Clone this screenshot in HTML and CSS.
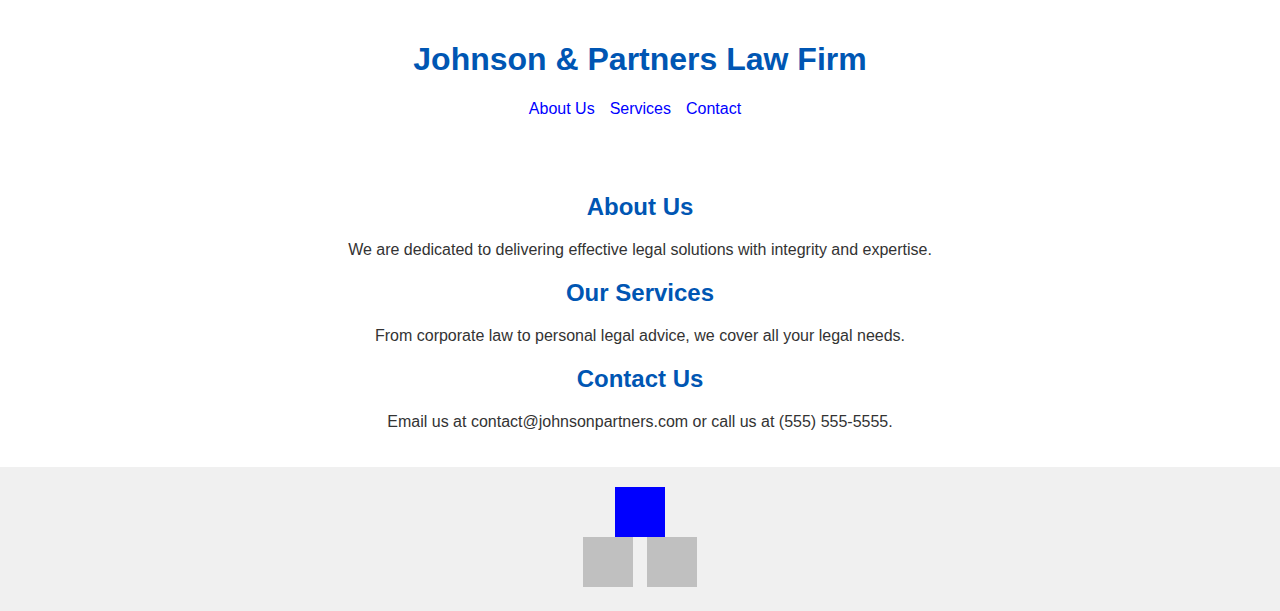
FILE: index.html
```html
<!DOCTYPE html>
<html lang="en">
<head>
<meta charset="utf-8">
<title>Johnson &amp; Partners Law Firm</title>
<link rel="stylesheet" href="styles.css">
</head>
<body>
<header class="site-header">
  <h1 class="title">Johnson &amp; Partners Law Firm</h1>
  <nav class="nav">
    <a href="#about">About Us</a>
    <a href="#services">Services</a>
    <a href="#contact">Contact</a>
  </nav>
</header>
<main class="content">
  <section id="about" class="section">
    <h2 class="section-title">About Us</h2>
    <p class="section-text">We are dedicated to delivering effective legal solutions with integrity and expertise.</p>
  </section>
  <section id="services" class="section">
    <h2 class="section-title">Our Services</h2>
    <p class="section-text">From corporate law to personal legal advice, we cover all your legal needs.</p>
  </section>
  <section id="contact" class="section">
    <h2 class="section-title">Contact Us</h2>
    <p class="section-text">Email us at contact@johnsonpartners.com or call us at (555) 555-5555.</p>
  </section>
</main>
<footer class="site-footer">
  <div class="logo">
    <div class="block block-top"></div>
    <div class="logo-row">
      <div class="block block-gray"></div>
      <div class="block block-gray"></div>
    </div>
  </div>
</footer>
</body>
</html>
```

FILE: styles.css
```css
html, body {
  margin: 0;
  padding: 0;
}
body {
  font-family: "Liberation Sans", Arial, sans-serif;
  color: #333333;
  background: #ffffff;
  text-align: center;
}
.site-header {
  padding: 20px 20px 35.5px;
}
.title {
  margin: 0.67em 0;
  font-size: 32px;
  font-weight: bold;
  color: #0056b3;
}
.nav {
  display: flex;
  justify-content: center;
  gap: 5px;
  font-size: 16px;
}
.nav a {
  color: #0000ff;
  text-decoration: none;
  margin-right: 10px;
}
.content {
  padding: 20px;
}
.section-title {
  margin: 0.83em 0;
  font-size: 24px;
  color: #0056b3;
}
.section-text {
  margin: 16px 0;
  font-size: 16px;
}
.site-footer {
  background: #f0f0f0;
  padding: 20px 0 24px;
  display: flex;
  justify-content: center;
}
.logo {
  display: flex;
  flex-direction: column;
  align-items: center;
}
.logo-row {
  display: flex;
  gap: 14px;
}
.block {
  width: 50px;
  height: 50px;
}
.block-top {
  background: #0000ff;
}
.block-gray {
  background: #c0c0c0;
}
```
